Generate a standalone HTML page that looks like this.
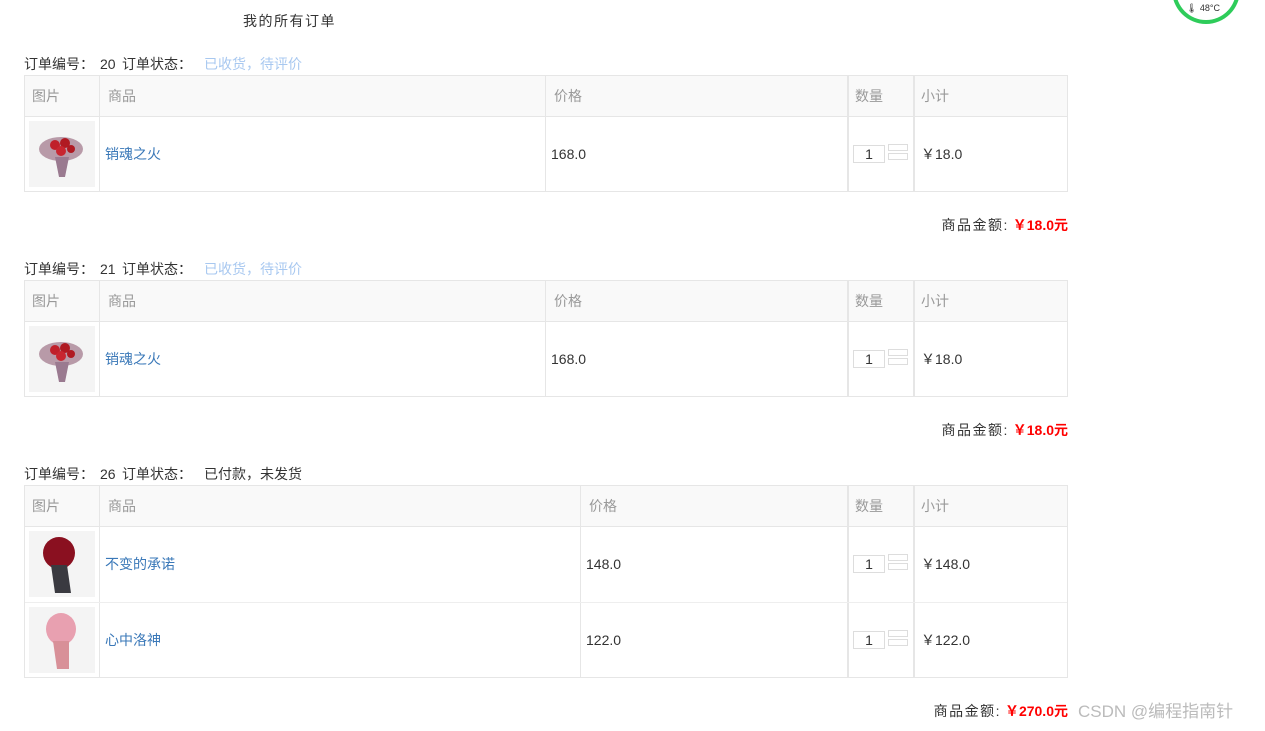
<!DOCTYPE html><html><head><meta charset="utf-8"><style>
body{margin:0;width:1265px;height:731px;background:#fff;font-family:"Liberation Sans","Noto Sans CJK SC",sans-serif;font-size:14px;line-height:16px;color:#333;position:relative;overflow:hidden}
.a{position:absolute;white-space:nowrap}
.t{position:absolute;left:24px;width:1044px;border:1px solid #e6e6e6;box-sizing:border-box}
.h{position:absolute;left:0;right:0;top:0;height:40px;background:#f9f9f9;border-bottom:1px solid #e6e6e6;color:#999}
.c{position:absolute;top:0;bottom:0;border-left:1px solid #e6e6e6}
.c2{border-left:2px solid #e6e6e6}
.r{position:absolute;left:0;right:0;height:76px;border-bottom:1px solid #eee}
.img{position:absolute;left:4px;top:5px;width:66px;height:66px;background:#f4f4f4}
.q{position:absolute;width:30px;height:16px;border:1px solid #ddd;text-align:center;line-height:16px;font-size:14px}
.qb{position:absolute;width:18px;height:5px;border:1px solid #ddd}
.lk{color:#3a78b8}
.sum{position:absolute;right:197px;font-size:14px}
.sum b{color:#f00}
.lb{letter-spacing:1.5px}
</style></head><body>
<div class="a lb" style="left:243px;top:13px">我的所有订单</div>
<div class="a" style="left:1172px;top:-30px;width:60px;height:50px;border:4px solid #2ecc5a;border-top:none;border-radius:0 0 40px 40px;"></div>
<div class="a" style="left:1186px;top:0px;font-size:9px;color:#333">🌡 48°C</div>

<div class="a" style="left:24px;top:56px">订单编号：</div><div class="a" style="left:100px;top:56px">20</div><div class="a" style="left:122px;top:56px">订单状态：</div><div class="a" style="left:204px;top:56px;color:#a8c8f0">已收货，待评价</div>
<div class="t" style="top:75px;height:117px">
<div class="h"><span class="a" style="left:7px;top:12px">图片</span><span class="a" style="left:83px;top:12px">商品</span><span class="a" style="left:529px;top:12px">价格</span><span class="a" style="left:830px;top:12px">数量</span><span class="a" style="left:896px;top:12px">小计</span></div>
<div class="c" style="left:74px"></div><div class="c" style="left:520px"></div><div class="c c2" style="left:822px"></div><div class="c c2" style="left:888px"></div>
<div class="r" style="top:40px;border:none"><div class="img"><svg width="66" height="66"><ellipse cx="32" cy="28" rx="22" ry="12" fill="#b89aa8"/><circle cx="26" cy="24" r="5" fill="#c0202a"/><circle cx="36" cy="22" r="5" fill="#b01a22"/><circle cx="32" cy="30" r="5" fill="#c82630"/><circle cx="42" cy="28" r="4" fill="#b01a22"/><path d="M26 36 L40 36 L36 56 L30 56Z" fill="#9a7a90"/></svg></div>
<span class="a lk" style="left:80px;top:30px">销魂之火</span><span class="a" style="left:526px;top:30px">168.0</span>
<div class="q" style="left:828px;top:29px">1</div><div class="qb" style="left:863px;top:28px"></div><div class="qb" style="left:863px;top:37px"></div>
<span class="a" style="left:896px;top:30px">￥18.0</span></div>
</div>
<div class="sum" style="top:217px"><span class="lb">商品金额:</span> <b>￥18.0元</b></div>

<div class="a" style="left:24px;top:261px">订单编号：</div><div class="a" style="left:100px;top:261px">21</div><div class="a" style="left:122px;top:261px">订单状态：</div><div class="a" style="left:204px;top:261px;color:#a8c8f0">已收货，待评价</div>
<div class="t" style="top:280px;height:117px">
<div class="h"><span class="a" style="left:7px;top:12px">图片</span><span class="a" style="left:83px;top:12px">商品</span><span class="a" style="left:529px;top:12px">价格</span><span class="a" style="left:830px;top:12px">数量</span><span class="a" style="left:896px;top:12px">小计</span></div>
<div class="c" style="left:74px"></div><div class="c" style="left:520px"></div><div class="c c2" style="left:822px"></div><div class="c c2" style="left:888px"></div>
<div class="r" style="top:40px;border:none"><div class="img"><svg width="66" height="66"><ellipse cx="32" cy="28" rx="22" ry="12" fill="#b89aa8"/><circle cx="26" cy="24" r="5" fill="#c0202a"/><circle cx="36" cy="22" r="5" fill="#b01a22"/><circle cx="32" cy="30" r="5" fill="#c82630"/><circle cx="42" cy="28" r="4" fill="#b01a22"/><path d="M26 36 L40 36 L36 56 L30 56Z" fill="#9a7a90"/></svg></div>
<span class="a lk" style="left:80px;top:30px">销魂之火</span><span class="a" style="left:526px;top:30px">168.0</span>
<div class="q" style="left:828px;top:29px">1</div><div class="qb" style="left:863px;top:28px"></div><div class="qb" style="left:863px;top:37px"></div>
<span class="a" style="left:896px;top:30px">￥18.0</span></div>
</div>
<div class="sum" style="top:422px"><span class="lb">商品金额:</span> <b>￥18.0元</b></div>

<div class="a" style="left:24px;top:466px">订单编号：</div><div class="a" style="left:100px;top:466px">26</div><div class="a" style="left:122px;top:466px">订单状态：</div><div class="a" style="left:204px;top:466px">已付款，未发货</div>
<div class="t" style="top:485px;height:193px">
<div class="h"><span class="a" style="left:7px;top:12px">图片</span><span class="a" style="left:83px;top:12px">商品</span><span class="a" style="left:564px;top:12px">价格</span><span class="a" style="left:830px;top:12px">数量</span><span class="a" style="left:896px;top:12px">小计</span></div>
<div class="c" style="left:74px"></div><div class="c" style="left:555px"></div><div class="c c2" style="left:822px"></div><div class="c c2" style="left:888px"></div>
<div class="r" style="top:40px"><div class="img"><svg width="66" height="66"><ellipse cx="30" cy="22" rx="16" ry="16" fill="#8a1020"/><path d="M22 34 L38 34 L42 62 L26 62Z" fill="#3a3a40"/></svg></div>
<span class="a lk" style="left:80px;top:30px">不变的承诺</span><span class="a" style="left:561px;top:30px">148.0</span>
<div class="q" style="left:828px;top:29px">1</div><div class="qb" style="left:863px;top:28px"></div><div class="qb" style="left:863px;top:37px"></div>
<span class="a" style="left:896px;top:30px">￥148.0</span></div>
<div class="r" style="top:116px;border:none"><div class="img"><svg width="66" height="66"><ellipse cx="32" cy="22" rx="15" ry="16" fill="#e8a0b0"/><path d="M24 34 L40 34 L40 62 L28 62Z" fill="#d89098"/></svg></div>
<span class="a lk" style="left:80px;top:30px">心中洛神</span><span class="a" style="left:561px;top:30px">122.0</span>
<div class="q" style="left:828px;top:29px">1</div><div class="qb" style="left:863px;top:28px"></div><div class="qb" style="left:863px;top:37px"></div>
<span class="a" style="left:896px;top:30px">￥122.0</span></div>
</div>
<div class="sum" style="top:703px"><span class="lb">商品金额:</span> <b>￥270.0元</b></div>
<div class="a" style="left:1078px;top:702px;font-size:17px;line-height:20px;color:#bbb">CSDN @编程指南针</div>
</body></html>
